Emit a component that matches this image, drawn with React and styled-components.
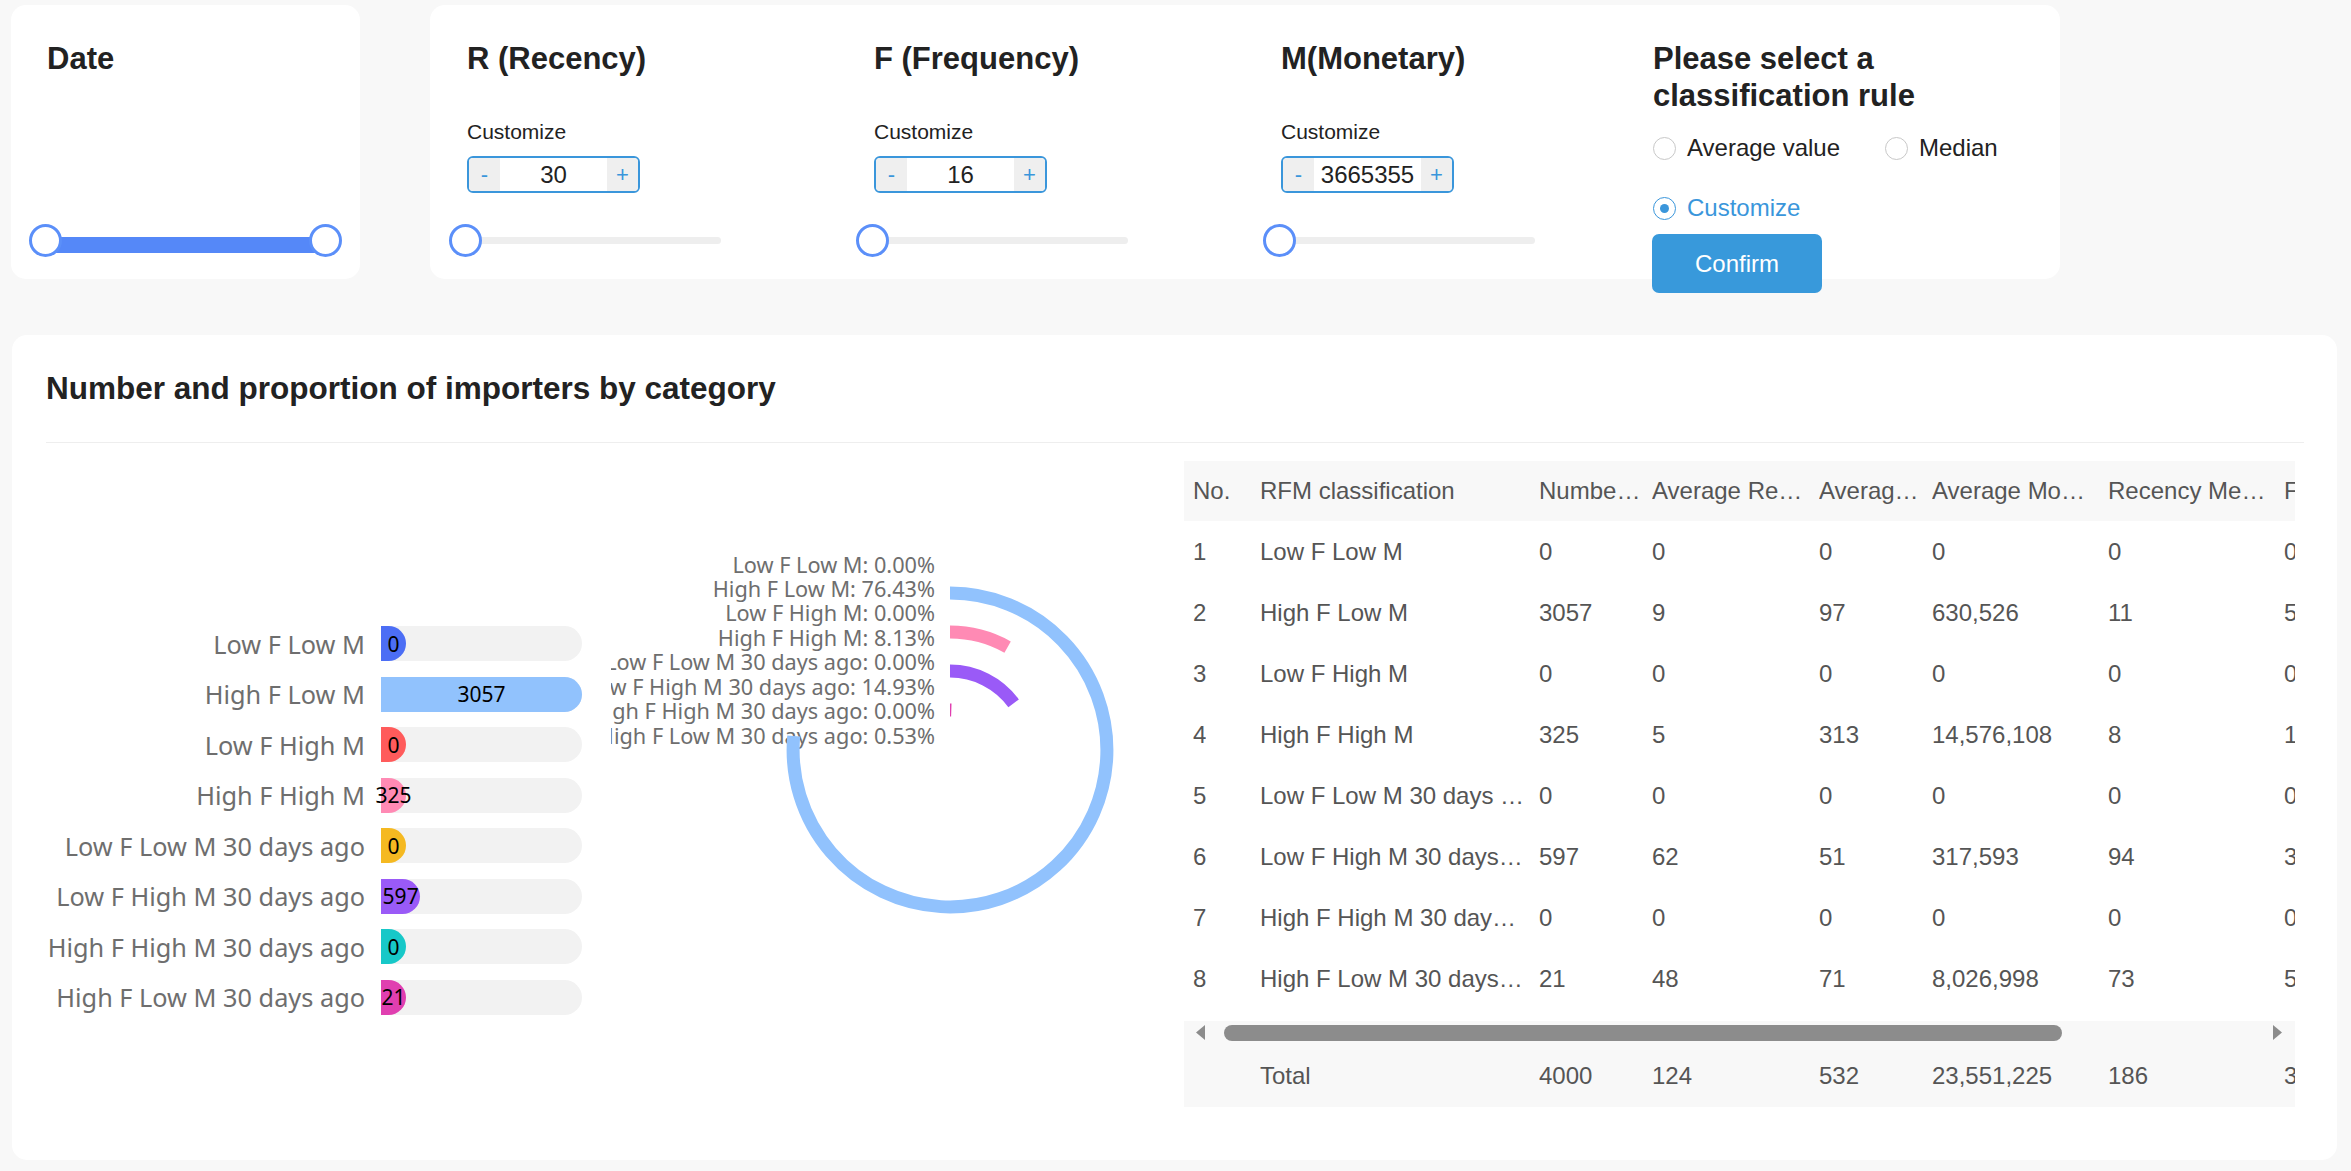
import React from 'react';
import styled, { createGlobalStyle } from 'styled-components';

const GlobalStyle = createGlobalStyle`
  html, body {
    margin: 0;
    padding: 0;
    background: #f8f8f8;
    font-family: "Liberation Sans", Arial, sans-serif;
    color: #222;
  }
`;

const Page = styled.div`
  min-height: 1171px;
  box-sizing: border-box;
  padding: 5px 14px 0 11px;
  background: #f8f8f8;
`;

const TopRow = styled.div`
  display: flex;
  gap: 70px;
  height: 274px;
`;

const Card = styled.div`
  background: #fff;
  border-radius: 15px;
  box-sizing: border-box;
`;

const DateCard = styled(Card)`
  width: 349px;
  height: 274px;
  padding: 35px 18px 22px;
  display: flex;
  flex-direction: column;
`;

const FilterCard = styled(Card)`
  width: 1630px;
  height: 274px;
  padding: 35px 37px 0;
  display: grid;
  grid-template-columns: 407px 407px 372px 1fr;
`;

const Title = styled.h3`
  margin: 0 0 0 ${p => p.indent || 0}px;
  font-size: ${p => p.size || 31}px;
  line-height: 37px;
  font-weight: 700;
  color: #222;
`;

const Column = styled.div`
  display: flex;
  flex-direction: column;
  align-items: flex-start;
`;

const SmallLabel = styled.div`
  margin-top: 43px;
  font-size: 21px;
  line-height: 24px;
  color: #222;
`;

const Stepper = styled.div`
  margin-top: 12px;
  width: 173px;
  height: 37px;
  box-sizing: border-box;
  border: 2px solid #3a96db;
  border-radius: 6px;
  display: flex;
  overflow: hidden;
`;

const StepButton = styled.span`
  width: 31px;
  background: #efefef;
  color: #3a96db;
  font-size: 22px;
  display: flex;
  align-items: center;
  justify-content: center;
`;

const StepValue = styled.span`
  flex: 1;
  display: flex;
  align-items: center;
  justify-content: center;
  font-size: 24px;
  color: #222;
`;

const Slider = styled.div`
  position: relative;
  margin-top: ${p => (p.auto ? 'auto' : '31px')};
  margin-left: ${p => (p.auto ? 0 : -18)}px;
  width: ${p => (p.auto ? '100%' : '272px')};
  height: 33px;
`;

const Track = styled.div`
  position: absolute;
  left: 16px;
  right: ${p => (p.range ? 16 : 0)}px;
  top: 13px;
  height: ${p => (p.range ? 16 : 7)}px;
  background: ${p => (p.range ? '#5588f8' : '#eeeeee')};
  border-radius: ${p => (p.range ? 0 : 4)}px;
`;

const Thumb = styled.div`
  position: absolute;
  top: 0;
  ${p => (p.end ? 'right: 0;' : 'left: 0;')}
  width: 33px;
  height: 33px;
  box-sizing: border-box;
  border: 3px solid #5b8ff9;
  border-radius: 50%;
  background: #fff;
`;

const RadioRow = styled.div`
  margin-top: ${p => p.gap}px;
  height: 28px;
  display: flex;
  align-items: center;
  gap: 45px;
`;

const RadioItem = styled.label`
  display: flex;
  align-items: center;
  gap: 11px;
  font-size: 24px;
  color: ${p => (p.checked ? '#3a96db' : '#222')};
`;

const RadioCircle = styled.span`
  width: 23px;
  height: 23px;
  box-sizing: border-box;
  border-radius: 50%;
  border: 1.5px solid ${p => (p.checked ? '#3a96db' : '#c8c8c8')};
  display: flex;
  align-items: center;
  justify-content: center;

  &::after {
    content: '';
    width: 9px;
    height: 9px;
    border-radius: 50%;
    background: ${p => (p.checked ? '#3a96db' : 'transparent')};
  }
`;

const ConfirmButton = styled.button`
  margin-top: 12px;
  margin-left: -1px;
  width: 170px;
  height: 59px;
  border: none;
  border-radius: 7px;
  background: #3899db;
  color: #fff;
  font-family: "Liberation Sans", Arial, sans-serif;
  font-size: 24px;
  flex-shrink: 0;
`;

const MainCard = styled(Card)`
  margin-top: 56px;
  width: 2325px;
  padding: 35px 33px 53px 34px;
  margin-left: 1px;
`;

const Divider = styled.div`
  margin-top: 35px;
  height: 1px;
  background: #eeeeee;
`;

const ContentRow = styled.div`
  display: flex;
  padding-top: 18px;
`;

const BarChart = styled.div`
  width: 565px;
  flex-shrink: 0;
  padding-top: 165px;
  display: flex;
  flex-direction: column;
  gap: 15.5px;
  font-family: "Noto Sans", "Open Sans", sans-serif;
`;

const BarRow = styled.div`
  display: flex;
  align-items: center;
  height: 35px;
  gap: 16px;
`;

const BarLabel = styled.div`
  width: 319px;
  text-align: right;
  font-size: 25.3px;
  color: #6e6e6e;
  white-space: nowrap;
`;

const BarTrack = styled.div`
  width: 201px;
  height: 35px;
  background: #f2f2f2;
  border-radius: 0 18px 18px 0;
`;

const BarFill = styled.div`
  position: relative;
  height: 100%;
  background: ${p => p.color};
  border-radius: 0 999px 999px 0;
`;

const BarValue = styled.span`
  position: absolute;
  left: 50%;
  top: 50%;
  transform: translate(-50%, -50%);
  font-size: 21px;
  color: #000;
  white-space: nowrap;
`;

const Donut = styled.svg`
  flex-shrink: 0;
  display: block;
  font-family: "Noto Sans", "Open Sans", sans-serif;
`;

const TableBox = styled.div`
  width: 1111px;
  flex-shrink: 0;
  overflow: hidden;
  font-size: 24px;
  color: #555;
`;

const columns = [67, 279, 113, 167, 113, 176, 176, 170];

const GridRow = styled.div`
  display: grid;
  grid-template-columns: ${columns.map(c => `${c}px`).join(' ')};
  height: ${p => p.h}px;
  background: ${p => (p.shaded ? '#f8f8f8' : '#fff')};
  width: ${columns.reduce((a, b) => a + b, 0)}px;
`;

const Cell = styled.div`
  display: flex;
  align-items: center;
  padding: 0 2px 0 9px;
  min-width: 0;
  overflow: hidden;

  span {
    overflow: hidden;
    white-space: nowrap;
    text-overflow: ellipsis;
  }
`;

const Spacer = styled.div`
  height: 12px;
`;

const ScrollBar = styled.div`
  height: 23px;
  background: #f8f8f8;
  display: flex;
  align-items: center;
  padding: 0 13px 0 12px;
  gap: 19px;
`;

const ScrollThumb = styled.div`
  width: 838px;
  height: 16px;
  border-radius: 8px;
  background: #8c8c8c;
`;

const ArrowGap = styled.div`
  flex: 1;
`;

const categories = [
  { name: 'Low F Low M', value: 0, color: '#4c6ef5' },
  { name: 'High F Low M', value: 3057, color: '#91c2fd' },
  { name: 'Low F High M', value: 0, color: '#ff5b5b' },
  { name: 'High F High M', value: 325, color: '#ff8ab4' },
  { name: 'Low F Low M 30 days ago', value: 0, color: '#f5b921' },
  { name: 'Low F High M 30 days ago', value: 597, color: '#9a5af7' },
  { name: 'High F High M 30 days ago', value: 0, color: '#17c8c8' },
  { name: 'High F Low M 30 days ago', value: 21, color: '#e03fb0' },
];

const headers = [
  'No.',
  'RFM classification',
  'Number of importers',
  'Average Recency',
  'Average Frequency',
  'Average Monetary',
  'Recency Median',
  'Frequency Median',
];

const rows = [
  ['1', 'Low F Low M', '0', '0', '0', '0', '0', '0'],
  ['2', 'High F Low M', '3057', '9', '97', '630,526', '11', '54'],
  ['3', 'Low F High M', '0', '0', '0', '0', '0', '0'],
  ['4', 'High F High M', '325', '5', '313', '14,576,108', '8', '187'],
  ['5', 'Low F Low M 30 days ago', '0', '0', '0', '0', '0', '0'],
  ['6', 'Low F High M 30 days ago', '597', '62', '51', '317,593', '94', '36'],
  ['7', 'High F High M 30 days ago', '0', '0', '0', '0', '0', '0'],
  ['8', 'High F Low M 30 days ago', '21', '48', '71', '8,026,998', '73', '52'],
];

const totalRow = ['', 'Total', '4000', '124', '532', '23,551,225', '186', '329'];

const total = 4000;
const maxValue = 3057;

const percent = v => (Math.round((v * 10000) / total) / 100).toFixed(2);

const MetricColumn = ({ title, value }) => (
  <Column>
    <Title>{title}</Title>
    <SmallLabel>Customize</SmallLabel>
    <Stepper>
      <StepButton>-</StepButton>
      <StepValue>{value}</StepValue>
      <StepButton>+</StepButton>
    </Stepper>
    <Slider>
      <Track />
      <Thumb />
    </Slider>
  </Column>
);

const Radio = ({ label, checked }) => (
  <RadioItem checked={checked}>
    <RadioCircle checked={checked} />
    {label}
  </RadioItem>
);

const cx = 339;
const cy = 289;

const arcPath = (r, pct) => {
  const a = pct * 2 * Math.PI;
  const x = cx + r * Math.sin(a);
  const y = cy - r * Math.cos(a);
  const large = pct > 0.5 ? 1 : 0;
  return `M ${cx} ${cy - r} A ${r} ${r} 0 ${large} 1 ${x.toFixed(2)} ${y.toFixed(2)}`;
};

const RoseChart = () => (
  <Donut width="573" height="646" viewBox="0 0 573 646">
    {categories.map((c, i) => (
      <text
        key={c.name}
        x="324"
        y={103 + i * 24.43}
        textAnchor="end"
        dominantBaseline="central"
        fontSize="21.7"
        fill="#6e6e6e"
      >
        {`${c.name}: ${percent(c.value)}%`}
      </text>
    ))}
    {categories.map((c, i) =>
      c.value > 0 ? (
        <path
          key={c.name}
          d={arcPath(176.4 - 19.5 * i, c.value / total)}
          fill="none"
          stroke={c.color}
          strokeWidth="13"
        />
      ) : null
    )}
  </Donut>
);

const App = () => (
  <Page>
    <GlobalStyle />
    <TopRow>
      <DateCard>
        <Title indent={18}>Date</Title>
        <Slider auto>
          <Track range />
          <Thumb />
          <Thumb end />
        </Slider>
      </DateCard>

      <FilterCard>
        <MetricColumn title="R (Recency)" value="30" />
        <MetricColumn title="F (Frequency)" value="16" />
        <MetricColumn title="M(Monetary)" value="3665355" />
        <Column>
          <Title>
            Please select a<br />
            classification rule
          </Title>
          <RadioRow gap={20}>
            <Radio label="Average value" />
            <Radio label="Median" />
          </RadioRow>
          <RadioRow gap={32}>
            <Radio label="Customize" checked />
          </RadioRow>
          <ConfirmButton>Confirm</ConfirmButton>
        </Column>
      </FilterCard>
    </TopRow>

    <MainCard>
      <Title size={31.5}>Number and proportion of importers by category</Title>
      <Divider />
      <ContentRow>
        <BarChart>
          {categories.map(c => (
            <BarRow key={c.name}>
              <BarLabel>{c.name}</BarLabel>
              <BarTrack>
                <BarFill
                  color={c.color}
                  style={{ width: Math.max(25, (c.value / maxValue) * 201) }}
                >
                  <BarValue>{c.value}</BarValue>
                </BarFill>
              </BarTrack>
            </BarRow>
          ))}
        </BarChart>

        <RoseChart />

        <TableBox>
          <GridRow h={60} shaded>
            {headers.map(h => (
              <Cell key={h}>
                <span>{h}</span>
              </Cell>
            ))}
          </GridRow>
          {rows.map(r => (
            <GridRow h={61} key={r[0]}>
              {r.map((v, i) => (
                <Cell key={i}>
                  <span>{v}</span>
                </Cell>
              ))}
            </GridRow>
          ))}
          <Spacer />
          <ScrollBar>
            <svg width="9" height="15" viewBox="0 0 9 15">
              <polygon points="9,0 9,15 0,7.5" fill="#8c8c8c" />
            </svg>
            <ScrollThumb />
            <ArrowGap />
            <svg width="9" height="15" viewBox="0 0 9 15">
              <polygon points="0,0 0,15 9,7.5" fill="#8c8c8c" />
            </svg>
          </ScrollBar>
          <GridRow h={63} shaded>
            {totalRow.map((v, i) => (
              <Cell key={i}>
                <span>{v}</span>
              </Cell>
            ))}
          </GridRow>
        </TableBox>
      </ContentRow>
    </MainCard>
  </Page>
);

export default App;
